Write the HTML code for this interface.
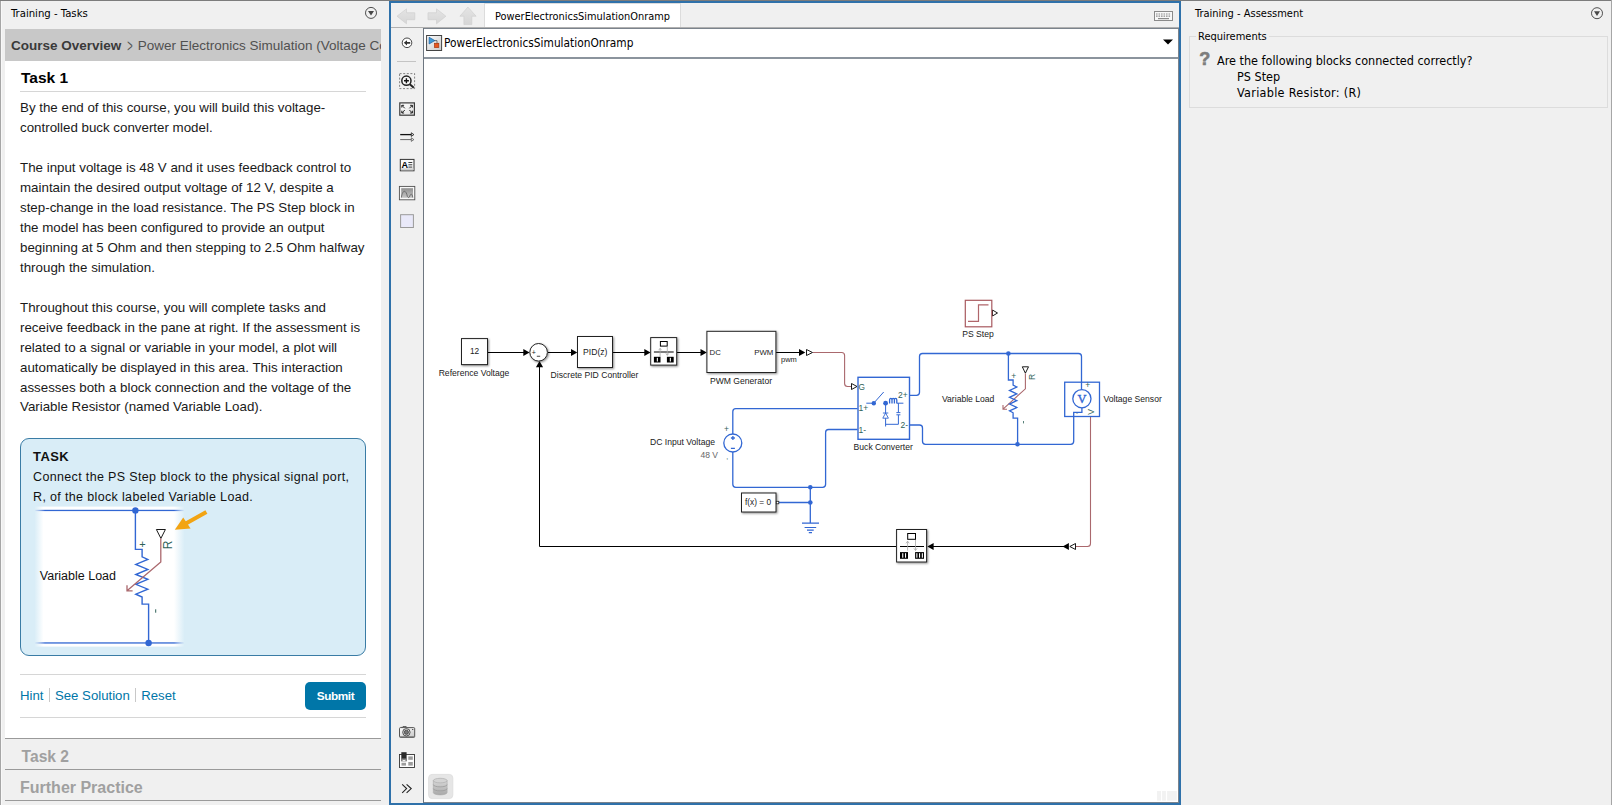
<!DOCTYPE html>
<html lang="en">
<head>
<meta charset="utf-8">
<title>Power Electronics Simulation Onramp</title>
<style>
html,body{margin:0;padding:0;}
body{width:1612px;height:805px;position:relative;overflow:hidden;background:#f0f0f0;font-family:"Liberation Sans",sans-serif;color:#000;}
.abs{position:absolute;}
.ui{font-family:"DejaVu Sans Condensed","DejaVu Sans","Liberation Sans",sans-serif;font-size:11px;color:#000;white-space:nowrap;}
/* left panel */
#lp-edge{left:0;top:0;width:1px;height:805px;background:#a6a6a6;border-right:1px solid #f8f8f8;}
#lp-title{left:11px;top:6.5px;font-size:11.25px;}
#crumb{z-index:2;left:5px;top:29px;width:376px;height:31.5px;background:#c8c8c8;overflow:hidden;white-space:nowrap;font-size:13.5px;line-height:33.3px;color:#505050;}
#crumb span{display:inline-block;transform:translateY(1.6px) scale(0.68,1.42);transform-origin:50% 58%;margin:0 0.2px 0 0.8px;}
#crumb b{color:#3a3a3a;margin-left:6px;}
#doc{left:5px;top:60px;width:376px;height:678px;background:#fff;}
#doc h1{position:absolute;left:16px;top:7.5px;margin:0;font-size:15.5px;line-height:20px;font-weight:bold;color:#000;}
.hr{position:absolute;left:15px;width:346px;height:1px;background:#d6d6d6;}
.p{position:absolute;left:15px;width:352px;font-size:13.33px;line-height:20px;color:#1a1a1a;white-space:nowrap;}
#task{position:absolute;left:15px;top:378px;width:344px;height:216px;background:#d9edf7;border:1px solid #3a7ca5;border-radius:9px;}
#task .t{position:absolute;left:12px;top:8.7px;font-weight:bold;font-size:13px;line-height:18px;letter-spacing:0.4px;color:#111;}
#task .d{position:absolute;left:12px;top:27.7px;font-size:12.5px;line-height:20px;white-space:nowrap;color:#111;letter-spacing:0.35px;}
#links{position:absolute;left:15px;top:626.8px;font-size:13.2px;line-height:18px;color:#0076a8;white-space:nowrap;}
#links i{display:inline-block;width:1px;height:14px;background:#c8c8c8;margin:0 5px 0 5.5px;vertical-align:-2px;}
#submit{position:absolute;left:300px;top:622px;width:61px;height:28px;border-radius:5px;background:#0076a8;color:#fff;font-weight:bold;font-size:11.8px;letter-spacing:-0.45px;line-height:28.5px;text-align:center;}
.sec{left:5px;width:376px;height:30px;border-top:1px solid #9a9a9a;font-weight:bold;font-size:15.8px;line-height:36px;color:#a0a0a0;text-indent:15.5px;}
/* center */
#frame{left:389px;top:1px;width:788px;height:800px;border:2px solid #2f71aa;background:#f0f0f0;}
#tab{left:484px;top:3px;width:195px;height:23px;background:#fff;text-align:center;line-height:25px;font-size:10.9px;border:1px solid #dcdcdc;border-bottom:none;}
#tabline{left:391px;top:27px;width:788px;height:1px;background:#b0b0b0;}
#pal-line{left:423px;top:28px;width:1px;height:775px;background:#6d7680;}
#addr{left:424px;top:29px;width:755px;height:28px;background:#fff;}
#addrline{left:424px;top:57px;width:755px;height:2px;background:#8b949d;}
#canvas{left:424px;top:59px;width:755px;height:744px;background:#fff;}
#addrtxt{left:444px;top:36px;font-size:11.8px;}
/* right */
#rp-title{left:1195px;top:7.2px;}
#grp{left:1189px;top:36px;width:417px;height:70px;border:1px solid #dcdcdc;}
#grp-l{left:1196px;top:30px;background:#f0f0f0;padding:0 2px;}
.q{font-size:12.5px;}
#rp-edge{left:1611px;top:0;width:1px;height:805px;background:#a6a6a6;}
svg{position:absolute;left:0;top:0;}
svg text{font-family:"Liberation Sans",sans-serif;}
</style>
</head>
<body>
<!-- LEFT PANEL -->
<div class="abs" id="lp-edge"></div>
<div class="abs" style="left:0;top:0;width:1612px;height:1px;background:#7c7c7c"></div>
<div class="abs ui" id="lp-title">Training - Tasks</div>
<div class="abs" id="crumb"><b>Course Overview</b> <span>&gt;</span> Power Electronics Simulation (Voltage Control)</div>
<div class="abs" id="doc">
  <h1>Task 1</h1>
  <div class="hr" style="top:31px"></div>
  <div class="p" style="top:37.5px">By the end of this course, you will build this voltage-<br>controlled buck converter model.</div>
  <div class="p" style="top:97.5px">The input voltage is 48 V and it uses feedback control to<br>maintain the desired output voltage of 12 V, despite a<br>step-change in the load resistance. The PS Step block in<br>the model has been configured to provide an output<br>beginning at 5 Ohm and then stepping to 2.5 Ohm halfway<br>through the simulation.</div>
  <div class="p" style="top:237.5px">Throughout this course, you will complete tasks and<br>receive feedback in the pane at right. If the assessment is<br>related to a signal or variable in your model, a plot will<br>automatically be displayed in this area. This interaction<br>assesses both a block connection and the voltage of the</div>
  <div class="p" style="top:336.5px">Variable Resistor (named Variable Load).</div>
  <div id="task">
    <div class="t">TASK</div>
    <div class="d">Connect the PS Step block to the physical signal port,<br>R, of the block labeled Variable Load.</div>
  </div>
  <div class="hr" style="top:614px"></div>
  <div id="links">Hint<i></i>See Solution<i></i>Reset</div>
  <div id="submit">Submit</div>
  <div class="hr" style="top:657px"></div>
</div>
<div class="abs sec" style="top:738px;font-size:15.6px;text-indent:16.6px">Task 2</div>
<div class="abs sec" style="top:769px;font-size:16px;text-indent:15px">Further Practice</div>
<div class="abs" style="left:5px;top:800px;width:376px;height:1px;background:#9a9a9a"></div>

<!-- CENTER -->
<div class="abs" id="frame"></div>
<div class="abs ui" id="tab">PowerElectronicsSimulationOnramp</div>
<div class="abs" id="tabline"></div>
<div class="abs" id="addr"></div>
<div class="abs" id="addrline"></div>
<div class="abs" style="left:423px;top:28px;width:756px;height:1px;background:#7b838c"></div>
<div class="abs" id="canvas"></div>
<div class="abs" id="pal-line"></div>
<div class="abs" style="left:1178px;top:29px;width:1px;height:774px;background:#7b838c"></div>
<div class="abs" style="left:424px;top:802px;width:755px;height:1px;background:#7b838c"></div>
<div class="abs ui" id="addrtxt">PowerElectronicsSimulationOnramp</div>

<!-- RIGHT PANEL -->
<div class="abs ui" id="rp-title">Training - Assessment</div>
<div class="abs" id="grp"></div>
<div class="abs ui" id="grp-l">Requirements</div>
<div class="abs ui q" style="left:1217px;top:53px">Are the following blocks connected correctly?</div>
<div class="abs ui q" style="left:1237px;top:69px">PS Step</div>
<div class="abs ui q" style="left:1237px;top:85px;letter-spacing:0.3px">Variable Resistor: (R)</div>
<div class="abs" style="left:1199.3px;top:49.3px;font-family:'Liberation Sans',sans-serif;font-weight:bold;font-size:18px;line-height:21px;color:#7d7d7d;-webkit-text-stroke:0.6px #7d7d7d;">?</div>
<div class="abs" id="rp-edge"></div>

<!--SVGSTART-->
<svg width="1612" height="805" viewBox="0 0 1612 805">
<defs>
  <filter id="sh" x="-20%" y="-20%" width="150%" height="150%"><feDropShadow dx="1" dy="1" stdDeviation="0.8" flood-color="#000" flood-opacity="0.45"/></filter>
  <g id="rt">
    <rect x="0" y="0" width="26" height="27.5" fill="#fff" stroke="#222" stroke-width="1" filter="url(#sh)"/>
    <rect x="9.7" y="3.9" width="6.8" height="4.6" fill="#fff" stroke="#000" stroke-width="1"/>
    <line x1="3.2" y1="14.4" x2="23" y2="14.4" stroke="#000" stroke-width="1"/>
    <path d="M9.4 19V10.7M8 12.6L9.4 10.7L10.8 12.6" fill="none" stroke="#aaa" stroke-width="0.8"/>
    <path d="M16.6 9V17.5M15.2 15.8L16.6 17.8L18 15.8" fill="none" stroke="#aaa" stroke-width="0.8"/>
    <rect x="3.2" y="19.2" width="6.6" height="5.7" fill="#000"/><rect x="6.1" y="20.2" width="1.1" height="3.7" fill="#fff"/>
    <rect x="16.2" y="19.2" width="6.8" height="5.7" fill="#000"/><rect x="19.1" y="20.2" width="1.1" height="3.7" fill="#fff"/>
  </g>
</defs>
<!-- mini task image -->
<linearGradient id="fade" x1="0" y1="0" x2="1" y2="0"><stop offset="0" stop-color="#d9edf7"/><stop offset="0.06" stop-color="#ffffff"/><stop offset="0.93" stop-color="#ffffff"/><stop offset="1" stop-color="#d9edf7"/></linearGradient>
<rect x="34.5" y="506.6" width="150" height="140" fill="url(#fade)"/>
<linearGradient id="fadeL" x1="0" y1="0" x2="1" y2="0"><stop offset="0" stop-color="#3267d3" stop-opacity="0"/><stop offset="0.07" stop-color="#3267d3"/><stop offset="0.93" stop-color="#3267d3"/><stop offset="1" stop-color="#3267d3" stop-opacity="0"/></linearGradient>
<rect x="34.5" y="509.8" width="150" height="1.3" fill="url(#fadeL)"/><rect x="34.5" y="642.3" width="150" height="1.3" fill="url(#fadeL)"/>
<path d="M135.4 510.4V549.4H142.1V556.8L147.8 559.4L135.8 564.4L147.8 569.4L135.8 574.5L147.8 579.3L135.8 584.3L147.8 589.2L135.8 594.2L142.1 597V604.1H148.6V643" stroke="#3267d3" stroke-width="1.4" fill="none" stroke-linejoin="miter"/>
<circle cx="135.4" cy="510.4" r="3.2" fill="#3267d3"/><circle cx="148.6" cy="643" r="3.2" fill="#3267d3"/>
<path d="M156.4 529.5H165.4L160.9 538.4Z" fill="#fff" stroke="#000" stroke-width="0.9"/>
<path d="M160.8 538.6V561.9L127.3 590.5M127 585.2V590.8H132.6" stroke="#aa686d" stroke-width="1.3" fill="none"/>
<g fill="#2f6258" font-size="9.5"><text x="139.2" y="548.4" font-size="11">+</text><rect x="155.2" y="609.3" width="1" height="3.4"/>
<text transform="translate(171.7,549.2) rotate(-90)" font-size="12">R</text></g>
<text x="39.8" y="580.2" font-size="12.5" fill="#111">Variable Load</text>
<path d="M206.4 512L185 524" stroke="#f2a413" stroke-width="4" fill="none"/>
<path d="M174.8 529.8L183.2 517.4L190.6 528.4Z" fill="#f2a413"/>
<g font-size="8.6" fill="#1a1a1a">
<!-- signal lines -->
<g stroke="#000" stroke-width="1" fill="none">
  <path d="M488 352.5H524"/><path d="M548 352.5H572"/><path d="M613 352.5H646"/><path d="M677 352.5H702"/><path d="M776 352.5H800"/>
  <path d="M1064 546.5H932"/><path d="M896 546.5H539.5V366.5"/>
</g>
<g fill="#000">
  <path d="M523.3 348.9L529.6 352.5L523.3 356.1Z"/><path d="M571.0 348.9L577.3 352.5L571.0 356.1Z"/><path d="M644.3 348.9L650.6 352.5L644.3 356.1Z"/><path d="M700.5 348.9L706.8 352.5L700.5 356.1Z"/><path d="M799.0 348.9L805.3 352.5L799.0 356.1Z"/>
  <path d="M535.9 367.2L539.5 360.9L543.1 367.2Z"/>
  <path d="M933.6 542.9L927.3 546.5L933.6 550.1Z"/><path d="M1068.9 542.9L1062.6 546.5L1068.9 550.1Z"/>
</g>
<!-- PS connection triangles -->
<g fill="#fff" stroke="#000" stroke-width="0.9">
  <path d="M806.5 349.5L812.5 352.5L806.5 355.5Z"/>
  <path d="M851.5 383.5L857 386.5L851.5 389.5Z"/>
  <path d="M1075.5 543.5L1069.8 546.5L1075.5 549.5Z"/>
  <path d="M992.5 310L997.5 313L992.5 316Z"/>
  <path d="M1022.3 366.8H1028.5L1025.4 373.2Z"/>
</g>
<!-- physical signal lines -->
<g stroke="#aa686d" stroke-width="1.1" fill="none">
  <path d="M813 352.5H841.6Q844.6 352.5 844.6 355.5V383.5Q844.6 386.5 847.6 386.5H851"/>
  <path d="M1090.5 417V543.5Q1090.5 546.5 1087.5 546.5H1076"/>
  <path d="M1025.4 373.5V388.8L1003.3 408.8M1003 405V409.2H1007"/>
</g>
<!-- electrical lines -->
<g stroke="#3267d3" stroke-width="1.3" fill="none">
  <path d="M732.8 434V411.7Q732.8 408.7 735.8 408.7H857.5"/>
  <path d="M732.8 452V484.3Q732.8 487.3 735.8 487.3H822.6Q825.6 487.3 825.6 484.3V432.5Q825.6 429.5 828.6 429.5H857.5"/>
  <path d="M810.3 487.3V523M779 502.5H810.3"/>
  <path d="M802 523.1H819M804.6 527.5H816.2M807 530.2H813.7M808.8 532.6H812" stroke-width="1.2"/>
  <path d="M910 395.3H916.5Q919.5 395.3 919.5 392.3V356.5Q919.5 353.5 922.5 353.5H1078.5Q1081.5 353.5 1081.5 356.5V390"/>
  <path d="M910 425H919.5Q922.5 425 922.5 428V441.3Q922.5 444.3 925.5 444.3H1070.7Q1073.7 444.3 1073.7 441.3V416.5"/>
  <path d="M1008.4 353.5V380H1013.1V385L1016.8 387L1009.5 390.4L1016.8 393.9L1009.5 397.3L1016.8 400.7L1009.5 404.1L1016.8 407.5L1009.5 410.9L1013.1 412.8V418.1H1017.6V444.3"/>
</g>
<g fill="#3267d3">
  <circle cx="810.3" cy="487.3" r="2.3"/><circle cx="810.3" cy="502.5" r="2.3"/>
  <circle cx="1008.4" cy="353.5" r="2.3"/><circle cx="1017.5" cy="444.3" r="2.3"/>
</g>
<!-- blocks -->
<rect x="461.5" y="338.6" width="26" height="26" fill="#fff" stroke="#222" filter="url(#sh)"/>
<text x="474.5" y="354" text-anchor="middle" font-size="8.3">12</text>
<text x="474" y="376.3" text-anchor="middle">Reference Voltage</text>
<circle cx="538.6" cy="352.3" r="8.8" fill="#fff" stroke="#222" filter="url(#sh)"/>
<text x="531.7" y="354.6" font-size="7">+</text><rect x="536.8" y="355.8" width="3.4" height="0.8"/>
<rect x="577.5" y="336.5" width="35" height="31" fill="#fff" stroke="#222" filter="url(#sh)"/>
<text x="595.3" y="354.8" text-anchor="middle" font-size="8.6">PID(z)</text>
<text x="594.5" y="378.3" text-anchor="middle">Discrete PID Controller</text>
<use href="#rt" x="650.7" y="337.6"/>
<rect x="706.9" y="331.3" width="69" height="41.2" fill="#fff" stroke="#222" filter="url(#sh)"/>
<text x="709.6" y="355.2" font-size="7.8">DC</text><text x="773.3" y="355.2" font-size="7.8" text-anchor="end">PWM</text>
<text x="741" y="384.3" text-anchor="middle">PWM Generator</text>
<text x="781" y="362" font-size="7.5">pwm</text>
<g>
  <rect x="896.6" y="529.5" width="30" height="32.5" fill="#fff" stroke="#222" stroke-width="1" filter="url(#sh)"/>
  <rect x="907.7" y="533.5" width="7.8" height="5.8" fill="#fff" stroke="#000" stroke-width="1"/>
  <line x1="900" y1="546.5" x2="924" y2="546.5" stroke="#000" stroke-width="1"/>
  <path d="M907.6 550.6V541.2M906 543.3L907.6 541.2L909.2 543.3" fill="none" stroke="#aaa" stroke-width="0.8"/>
  <path d="M915.5 540V550.3M913.9 548.3L915.5 550.5L917.1 548.3" fill="none" stroke="#aaa" stroke-width="0.8"/>
  <rect x="900" y="552.1" width="8" height="6.7" fill="#000"/><rect x="902.2" y="553.2" width="1.1" height="4.5" fill="#fff"/><rect x="905" y="553.2" width="1.1" height="4.5" fill="#fff"/>
  <rect x="915.1" y="552.1" width="8.9" height="6.7" fill="#000"/><rect x="916.3" y="553.2" width="1.1" height="4.5" fill="#fff"/><rect x="919" y="553.2" width="1.1" height="4.5" fill="#fff"/><rect x="921.8" y="553.2" width="1.1" height="4.5" fill="#fff"/>
</g>
<!-- DC source -->
<circle cx="732.8" cy="443" r="9" fill="#fff" stroke="#3267d3" stroke-width="1.3"/>
<path d="M730.9 438H734.9M732.9 436V440M730.9 448.4H734.9" stroke="#3267d3" stroke-width="1.3" fill="none"/>
<text x="724" y="431.7" font-size="8.5" fill="#2f6258">+</text><text x="726.3" y="459" font-size="7" fill="#2f6258">,</text>
<text x="715" y="444.7" text-anchor="end">DC Input Voltage</text>
<text x="718" y="457.9" text-anchor="end" font-size="8.5" fill="#666">48 V</text>
<!-- solver -->
<rect x="741.5" y="493" width="34.5" height="19" fill="#fff" stroke="#222" filter="url(#sh)"/>
<text x="758" y="504.7" text-anchor="middle" font-size="8.3">f(x) = 0</text>
<rect x="776.3" y="501.3" width="2.5" height="2.5" fill="#fff" stroke="#222" stroke-width="0.8"/>
<!-- Buck converter -->
<rect x="858" y="377.3" width="51.5" height="62" fill="#fff" stroke="#3267d3" stroke-width="1.4"/>
<g fill="#2f6258" font-size="8.5">
  <text x="858.6" y="389.8" font-size="8.3">G</text><text x="858.6" y="411.2">1+</text><text x="858.6" y="433.2">1-</text>
  <text x="907.8" y="398.3" text-anchor="end">2+</text><text x="908" y="428" text-anchor="end">2-</text>
</g>
<g stroke="#3267d3" stroke-width="1" fill="none">
  <path d="M866.3 403.2H872M874.6 402.2L883.7 392M885.6 403.2V426.5M896.9 403.2H903.4M898.4 403.2V412.3M896.4 412.6H900.4M896.4 414.8H900.4M898.4 415V424.3H885.6"/>
  <path d="M885.6 413L882.8 418.2H888.4ZM882.9 413H888.3" fill="#fff" stroke-width="0.9"/>
  <path d="M889.6 403.4V400A1.2 1.6 0 0 1 892 400V403.4M892 400A1.2 1.6 0 0 1 894.4 400V403.4M894.4 400A1.2 1.6 0 0 1 896.8 400V403.4" stroke-width="1.3"/>
</g>
<circle cx="873.8" cy="403.2" r="2.2" fill="#3267d3"/><circle cx="885.6" cy="403.2" r="2.4" fill="#3267d3"/>
<text x="883.2" y="450.3" text-anchor="middle">Buck Converter</text>
<!-- Variable load -->
<text x="942" y="402" >Variable Load</text>
<g fill="#2f6258" font-size="7"><text x="1011.3" y="379.3" font-size="8.5">+</text><rect x="1023.1" y="421" width="0.8" height="2.4"/>
<text transform="translate(1034.6,380) rotate(-90)" font-size="8.6">R</text></g>
<!-- Voltage sensor -->
<rect x="1064.7" y="382.2" width="34.8" height="34.3" fill="#fff" stroke="#3267d3" stroke-width="1.3"/>
<path d="M1081.5 382V390M1081.9 407.5V412.4H1073.7V416.5" stroke="#3267d3" stroke-width="1.3" fill="none"/>
<circle cx="1081.9" cy="398.7" r="9.1" fill="#fff" stroke="#3267d3" stroke-width="1.3"/>
<text x="1082" y="402.9" text-anchor="middle" font-size="12.4" fill="#3267d3" stroke="#3267d3" stroke-width="0.4" style="font-family:'Liberation Serif',serif">V</text>
<g fill="#2f6258" font-size="7"><text x="1085.3" y="388.3" font-size="8.5">+</text><text x="1076" y="414.5" font-size="6">-</text>
<text transform="translate(1093.6,414.8) rotate(-90)" font-size="8.6">V</text></g>
<text x="1103.5" y="402">Voltage Sensor</text>
<!-- PS Step -->
<rect x="965.3" y="300.3" width="26.5" height="26.5" fill="#fff" stroke="#a8595f" stroke-width="1.2"/>
<path d="M968 321.3H978.5V304.8H988.5" stroke="#b0666b" stroke-width="1.2" fill="none"/>
<text x="978" y="337.2" text-anchor="middle">PS Step</text>
</g>
</svg>
<!--SVGEND-->
<!--ICONSTART-->
<svg width="1612" height="805" viewBox="0 0 1612 805">
<defs>
 <linearGradient id="gA" x1="0" y1="0" x2="0" y2="1"><stop offset="0" stop-color="#e4e4e4"/><stop offset="1" stop-color="#d6d6d6"/></linearGradient>
 <linearGradient id="gB" x1="0" y1="0" x2="1" y2="1"><stop offset="0" stop-color="#ffffff"/><stop offset="1" stop-color="#c8c8c8"/></linearGradient>
 <linearGradient id="gC" x1="0" y1="0" x2="0" y2="1"><stop offset="0" stop-color="#909090"/><stop offset="1" stop-color="#c4c4c4"/></linearGradient>
 <linearGradient id="gD" x1="0" y1="0" x2="0" y2="1"><stop offset="0" stop-color="#d8d8d8"/><stop offset="1" stop-color="#a8a8a8"/></linearGradient>
 <linearGradient id="gE" x1="0" y1="0" x2="1" y2="1"><stop offset="0" stop-color="#ffffff"/><stop offset="1" stop-color="#e0e0e0"/></linearGradient>
</defs>
<!-- panel dropdown buttons -->
<g fill="none" stroke="#505050" stroke-width="1"><circle cx="371" cy="12.9" r="5.5"/><circle cx="1597" cy="13.2" r="5.5"/></g>
<path d="M368 11H374L371 15.6Z M1594 11.3H1600L1597 15.9Z" fill="#484848"/>
<!-- nav arrows -->
<g fill="url(#gA)" stroke="#d0d0d0" stroke-width="0.7">
 <path d="M397 16.2L406.5 8.9V12.8H414.8V19.7H406.5V23.8Z"/>
 <path d="M445.9 16.2L436.5 8.9V12.8H428V19.7H436.5V23.8Z"/>
 <path d="M467.9 7.1L476.1 16.2H471.8V24.6H463.9V16.2H459.9Z"/>
</g>
<!-- keyboard icon -->
<g><rect x="1154.5" y="11.5" width="18" height="9" fill="#f8f8f8" stroke="#8a8a8a"/>
<path d="M1156 14H1171M1156 16.2H1171" stroke="#8a8a8a" stroke-width="1.2" stroke-dasharray="1.6 0.9"/><path d="M1158 18.6H1169" stroke="#8a8a8a" stroke-width="1.2"/></g>
<!-- address dropdown -->
<path d="M1163 39.5H1173L1168 44.5Z" fill="#000"/>
<!-- back circle -->
<circle cx="407" cy="42.8" r="4.8" fill="#fff" stroke="#333" stroke-width="0.9"/>
<path d="M403.8 42.8L407 40.2V41.9H410.2V43.7H407V45.4Z" fill="#333"/>
<!-- model icon -->
<rect x="426.6" y="35.5" width="15" height="15" fill="url(#gB)" stroke="#444" stroke-width="1"/>
<path d="M434 40.6H437V44" fill="none" stroke="#555" stroke-width="0.8"/>
<path d="M429.1 37.2L434.8 40.6L429.1 44Z" fill="#3d9ad6" stroke="#1a5fa0" stroke-width="0.7"/>
<rect x="434.6" y="43.3" width="4.2" height="4.2" fill="#e8571e" stroke="#a6330c" stroke-width="0.7"/>
<!-- palette separator -->
<rect x="397" y="61" width="19" height="1" fill="#c4c4c4"/>
<!-- zoom icon -->
<rect x="399.6" y="73.6" width="15" height="15" fill="none" stroke="#666" stroke-width="0.8" stroke-dasharray="2 1.6"/>
<circle cx="406.4" cy="80.7" r="4.6" fill="#f6f6f6" stroke="#222" stroke-width="1.5"/>
<path d="M404 80.7H408.9M406.4 78.3V83.2" stroke="#111" stroke-width="1.4"/>
<path d="M409.8 84.3L413.8 87.8" stroke="#222" stroke-width="2"/>
<!-- fit view -->
<rect x="399.8" y="102.9" width="14.6" height="12.3" fill="url(#gE)" stroke="#3a3a3a" stroke-width="1.2"/>
<g stroke="#222" stroke-width="1" fill="none">
 <path d="M404.8 108.3L401.8 105.3M401.8 107.6V105.3H404.1"/>
 <path d="M409.4 108.3L412.4 105.3M410.1 105.3H412.4V107.6"/>
 <path d="M404.8 110L401.8 113M401.8 110.7V113H404.1"/>
 <path d="M409.4 110L412.4 113M410.1 113H412.4V110.7"/>
</g>
<!-- arrows icon -->
<g fill="none"><path d="M400.2 134.6H411.5" stroke="#111" stroke-width="1.3"/><path d="M400.2 139.6H411.5" stroke="#444" stroke-width="0.8"/>
<path d="M411.3 132.8L413.9 134.6L411.3 136.4Z" stroke="#111" stroke-width="0.8" fill="#f0f0f0"/><path d="M411.3 137.8L413.9 139.6L411.3 141.4Z" stroke="#444" stroke-width="0.7" fill="#f0f0f0"/></g>
<!-- annotation icon -->
<rect x="400.3" y="159.4" width="13.7" height="11.4" fill="#fafafa" stroke="#333" stroke-width="1"/>
<path d="M400.8 169.3H413.5" stroke="#cfcfcf" stroke-width="2"/>
<text x="401.6" y="168.3" font-size="9" font-weight="bold" fill="#000" style="font-family:'Liberation Sans',sans-serif">A</text>
<path d="M408.4 162.5H412.3M408.4 164.8H412.3M408.4 167.1H412.3" stroke="#222" stroke-width="0.9"/>
<!-- image icon -->
<rect x="399.4" y="186.4" width="15.4" height="13.4" fill="#f8f8f8" stroke="#505050" stroke-width="0.9"/>
<rect x="401.2" y="188.2" width="11.8" height="9.6" fill="url(#gC)"/>
<path d="M401.4 197.5C402.3 189.5 406.2 189.5 407.3 196.3C408.3 198 409.2 198 409.8 196C410.8 193.3 412.2 193.3 412.8 197.5" fill="none" stroke="#666" stroke-width="0.9"/>
<!-- blank square -->
<rect x="400.6" y="214.7" width="12.8" height="12.8" fill="#e9e9f9" stroke="#9a9a9a" stroke-width="1"/>
<!-- camera -->
<g><path d="M400.6 727.4H403V726.5H406.2V727.4" fill="#eee" stroke="#444" stroke-width="0.8"/>
<rect x="399.5" y="727.6" width="15.2" height="9.8" rx="1" fill="url(#gB)" stroke="#444" stroke-width="0.9"/>
<rect x="399.9" y="736.3" width="14.4" height="1.2" fill="#777"/>
<circle cx="406.4" cy="732.3" r="3.7" fill="#e0e0e0" stroke="#444" stroke-width="0.9"/><circle cx="406.4" cy="732.3" r="2.1" fill="#777" stroke="#333" stroke-width="0.7"/>
<rect x="412" y="729" width="1.3" height="1" fill="#555"/></g>
<!-- palette/style icon -->
<rect x="399.5" y="754.5" width="15" height="13" fill="#fdfdfd" stroke="#333" stroke-width="0.9"/>
<rect x="401.3" y="752.2" width="5.3" height="9" fill="#2a2a2a"/><path d="M401.3 758.5H406.6V761.3H401.3Z" fill="#888"/><path d="M402 761.3Q404 758.8 406 761.3Z" fill="#fff"/>
<g fill="#9c9c9c"><rect x="408.3" y="756.4" width="4.5" height="3.4"/><rect x="408.3" y="762" width="4.5" height="3.6"/><rect x="401.5" y="762.8" width="4.5" height="2.8"/></g>
<!-- chevrons -->
<path d="M402.2 784.3L406.6 788.6L402.2 792.9M406.6 784.3L411.2 788.6L406.6 792.9" fill="none" stroke="#222" stroke-width="1.1"/>
<!-- db button -->
<rect x="428.6" y="774.4" width="24.2" height="24.2" rx="3.5" fill="#e6e6e6" stroke="#dcdcdc" stroke-width="0.8"/>
<g stroke="#a8a8a8" stroke-width="0.6"><path d="M433.3 780.6V792.6A6.9 2.3 0 0 0 447.1 792.6V780.6Z" fill="url(#gD)"/>
<ellipse cx="440.2" cy="780.6" rx="6.9" ry="2.3" fill="#d4d4d4"/>
<path d="M433.3 784.6A6.9 2.3 0 0 0 447.1 784.6M433.3 788.6A6.9 2.3 0 0 0 447.1 788.6" fill="none" stroke="#9a9a9a" stroke-width="0.8"/></g>
<!-- canvas bottom-right ghost -->
<g fill="#f2f2f2"><rect x="1157" y="791" width="4" height="9.7"/><rect x="1162.1" y="791" width="3.8" height="9.7"/><rect x="1167.1" y="791" width="9.7" height="9.7"/></g>
</svg>
<!--ICONEND-->
</body>
</html>
